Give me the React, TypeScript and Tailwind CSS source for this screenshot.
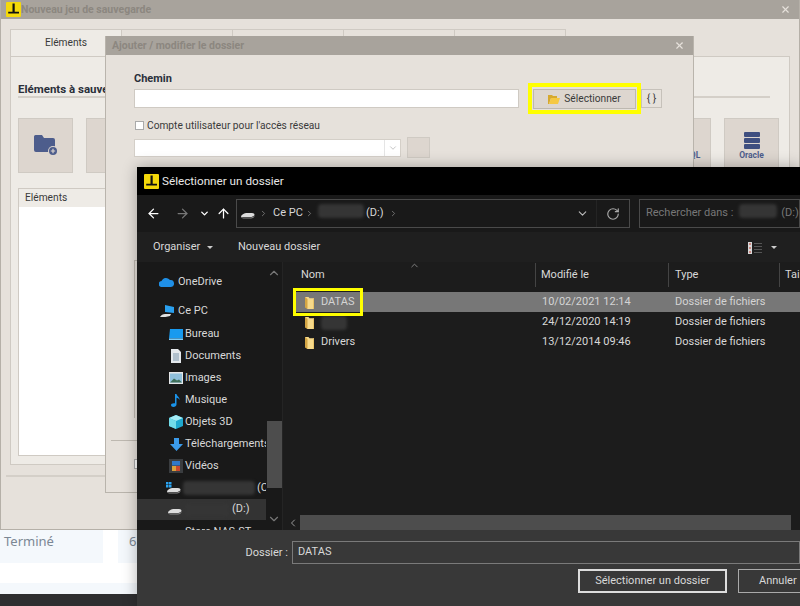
import { ChevronDown, ChevronLeft, ChevronRight, ChevronUp, ArrowLeft, ArrowRight, ArrowUp, RotateCw, X } from 'lucide-react';

function Logo({ size }: { size: number }) {
  return (
    <svg width={size} height={size} viewBox="0 0 15 15" className="shrink-0">
      <rect width="15" height="15" rx="1" fill="#f5d90a" />
      <path d="M6.5 1.5h2.2v8.2h4.3v1.800H2.200V9.700h4.300z" fill="#111" />
    </svg>
  );
}

function Blur({ w, h = 14 }: { w: number; h?: number }) {
  return <span className="inline-block shrink-0 rounded-sm bg-[#353535] blur-[1.5px]" style={{ width: w, height: h }} />;
}

function Folder() {
  return (
    <svg width="11" height="14" viewBox="0 0 11 14" className="shrink-0">
      <path d="M1 1h3.500l1 1.200H10V13H3z" fill="#f6d98a" />
      <path d="M1 1l2.500 2v10L1 11.500z" fill="#d3a544" />
      <path d="M9.200 2.200H10V13h-.8z" fill="#e6bd5e" />
    </svg>
  );
}

function DriveIcon({ win }: { win?: boolean }) {
  return (
    <svg width="15" height="13" viewBox="0 0 15 13" className="shrink-0">
      {win && (
        <g fill="#2aa3f0">
          <rect x="0" y="0" width="2.500" height="2.500" />
          <rect x="3" y="0" width="2.500" height="2.500" />
          <rect x="0" y="3" width="2.500" height="2.500" />
          <rect x="3" y="3" width="2.500" height="2.500" />
        </g>
      )}
      <path d="M1 9.500C1 8 3.500 6.500 6 6h6c1.500 0 2.500.8 2.500 1.800S13 9.500 11.500 10H3C1.800 10 1 10.300 1 9.500z" fill="#dcdcdc" />
      <path d="M1 9.500c.5.800 1.500 1 2.500 1h7.500c1.500 0 3.500-1 3.500-2.500v1c0 1.300-2 2.500-3.500 2.500H3.500C2 11.500 1 10.700 1 9.500z" fill="#8a8a8a" />
    </svg>
  );
}

function NavIcon({ name }: { name: string }) {
  switch (name) {
    case 'bureau':
      return <svg width="14" height="12" viewBox="0 0 14 12"><path d="M1 1h13v9.500H0z" fill="#189aef" /><path d="M0 10.500h14V12H0z" fill="#7fccf6" /></svg>;
    case 'docs':
      return <svg width="12" height="14" viewBox="0 0 12 14"><path d="M1 0h7l3 3v11H1z" fill="#e4e8ec" /><path d="M3 5h6M3 7h6M3 9h6M3 11h6" stroke="#7d97ad" /></svg>;
    case 'images':
      return <svg width="14" height="12" viewBox="0 0 14 12"><rect width="14" height="12" fill="#e4e6e8" /><rect x="1" y="1.500" width="12" height="9" fill="#8fc0dc" /><path d="M1 10.500l4-4 3 2 2-1 3 3z" fill="#3f6f5a" /></svg>;
    case 'music':
      return <svg width="10" height="14" viewBox="0 0 10 14"><path d="M4 1h1.500c.4 2.500 3.500 3 3 6-.7-1.500-2-2.200-3-2.300V11.500C5.500 13 4 14 2.500 14S0 13.200 0 12s1.500-2 4-1.700z" fill="#1a93e8" /></svg>;
    case 'obj':
      return <svg width="14" height="14" viewBox="0 0 14 14"><path d="M7 0l7 3v8l-7 3-7-3V3z" fill="#1fa9cf" /><path d="M7 0l7 3-7 3-7-3z" fill="#a5ecf5" /><path d="M0 3l7 3v8l-7-3z" fill="#72dce9" /></svg>;
    case 'dl':
      return <svg width="13" height="13" viewBox="0 0 13 13"><path d="M4 0h5v6h4l-6.500 7L0 6h4z" fill="#3b9bea" /></svg>;
    default:
      return (
        <svg width="14" height="14" viewBox="0 0 14 14">
          <rect width="14" height="14" fill="#3a3d40" />
          <rect x="3" y="2" width="8" height="4.500" fill="#2f78c9" />
          <rect x="3" y="7" width="4" height="5" fill="#d9a13c" />
          <rect x="7" y="7" width="4" height="5" fill="#c9482f" />
        </svg>
      );
  }
}

function NavRow({ icon, label }: { icon: string; label: string }) {
  return (
    <div className="flex h-[22px] items-center pl-[30px]">
      <span className="flex w-[18px] shrink-0 justify-center"><NavIcon name={icon} /></span>
      <span className="whitespace-nowrap">{label}</span>
    </div>
  );
}

function FileRow({ name, blur, date, selected }: { name?: string; blur?: boolean; date: string; selected?: boolean }) {
  return (
    <div className={`flex h-5 items-center pt-[1px] ${selected ? 'bg-[#777777] text-[#d4d4d4]' : ''}`}>
      <div className="flex w-[249px] items-center gap-[6px] pl-[11px]">
        <Folder />
        {name}
        {blur && <Blur w={26} />}
      </div>
      <div className="w-[133px]">{date}</div>
      <div>Dossier de fichiers</div>
    </div>
  );
}

function FileDialog() {
  return (
    <div className="absolute left-[137px] top-[167px] flex h-[439px] w-[663px] flex-col overflow-hidden bg-[#383838] font-['Roboto',sans-serif] text-[11px] text-[#d8d8d8] shadow-[0_0_14px_rgba(0,0,0,0.3)]">
      <div className="flex h-7 shrink-0 items-center gap-[3px] bg-black pl-[7px] pt-[1px] text-[11.7px] text-[#e8e8e8]">
        <Logo size={15} />
        Sélectionner un dossier
      </div>
      <div className="flex h-[37px] shrink-0 items-center bg-[#191919]">
        <div className="flex w-[99px] shrink-0 items-center pl-[9px]">
          <ArrowLeft size={15} strokeWidth={2} className="text-white" />
          <ArrowRight size={15} strokeWidth={2} className="ml-[14px] text-[#777777]" />
          <ChevronDown size={11} strokeWidth={3} className="ml-[9px] text-white" />
          <ArrowUp size={15} strokeWidth={2} className="ml-[6px] text-white" />
        </div>
        <div className="flex h-[29px] w-[394px] shrink-0 items-center border border-[#4a4a4a] pl-[3px]">
          <DriveIcon />
          <ChevronRight size={9} className="ml-[4px] text-[#888888]" />
          <span className="ml-[5px] w-[28px] whitespace-nowrap">Ce PC</span>
          <ChevronRight size={9} className="ml-[4px] text-[#888888]" />
          <span className="ml-[4px]"><Blur w={46} /></span>
          <span className="ml-[2px]">(D:)</span>
          <ChevronRight size={9} className="ml-[6px] text-[#888888]" />
          <ChevronDown size={13} className="ml-auto text-[#bbbbbb]" />
          <div className="ml-[7px] flex h-full w-[33px] items-center justify-center border-l border-[#242424]">
            <RotateCw size={14} className="text-[#aaaaaa]" />
          </div>
        </div>
        <div className="ml-[9px] flex h-[29px] flex-1 items-center gap-1 whitespace-nowrap border border-[#4a4a4a] pl-[6px] text-[#777777]">
          Rechercher dans :<span className="ml-[2px]"><Blur w={38} /></span>(D:)
        </div>
      </div>
      <div className="flex h-[30px] shrink-0 items-center bg-[#1f1f1f] pl-4 pr-[23px] pt-[1px]">
        <div className="flex w-[85px] items-center">
          Organiser
          <span className="ml-[7px] border-x-[3px] border-t-[3px] border-x-transparent border-t-[#cccccc]" />
        </div>
        Nouveau dossier
        <svg width="14" height="12" viewBox="0 0 14 12" className="ml-auto">
          <rect width="4" height="12" fill="#d7d7d7" />
          <path d="M1 2h2M1 6h2M1 10h2" stroke="#c0392b" />
          <path d="M6 1.500h8M6 4.500h8M6 7.500h8M6 10.500h8" stroke="#555555" />
        </svg>
        <span className="ml-[9px] border-x-[3px] border-t-[3px] border-x-transparent border-t-[#cccccc]" />
      </div>
      <div className="flex h-[268px] shrink-0">
        <div className="flex w-[146px] shrink-0 border-r border-[#242424] bg-[#191919]">
          <div className="w-[129px] overflow-hidden pt-[9px]">
            <div className="flex h-[22px] items-center gap-[4px] pl-[22px]">
              <svg width="15" height="10" viewBox="0 0 15 10"><path d="M3 10a3 3 0 0 1-.5-6A5 5 0 0 1 11 3a3.500 3.500 0 0 1 1 7z" fill="#1f8fe6" /></svg>
              OneDrive
            </div>
            <div className="mb-[1px] mt-[7px] flex h-[22px] items-center gap-[4px] pl-[23px]">
              <svg width="14" height="14" viewBox="0 0 14 14">
                <path d="M5 1l9 2v6l-9-1z" fill="#2aa0ef" />
                <path d="M0 13c1-2 3-3 5-3h6l-1 2c-3 1-6 1-10 1z" fill="#e2e2e2" />
              </svg>
              Ce PC
            </div>
            <NavRow icon="bureau" label="Bureau" />
            <NavRow icon="docs" label="Documents" />
            <NavRow icon="images" label="Images" />
            <NavRow icon="music" label="Musique" />
            <NavRow icon="obj" label="Objets 3D" />
            <NavRow icon="dl" label="Téléchargements" />
            <NavRow icon="videos" label="Vidéos" />
            <div className="flex h-[22px] items-center gap-[2px] whitespace-nowrap pl-[29px]">
              <DriveIcon win />
              <Blur w={72} />
              (C:
            </div>
            <div className="flex h-[21px] items-center gap-[2px] bg-[#333333] pl-[30px]">
              <DriveIcon />
              <Blur w={46} />
              (D:)
            </div>
            <div className="flex h-[24px] items-center whitespace-nowrap pl-[48px]">Store&nbsp;NAS-ST</div>
          </div>
          <div className="flex w-[16px] flex-col items-center justify-between py-1 text-[#777777]">
            <ChevronUp size={14} />
            <div className="mb-[24px] mt-auto h-[67px] w-[15px] bg-[#4d4d4d]" />
            <ChevronDown size={14} />
          </div>
        </div>
        <div className="flex min-w-0 flex-1 flex-col bg-[#1c1c1c] pl-[10px]">
          <div className="flex h-[30px] shrink-0 items-start pt-[1px]">
            <div className="flex h-[24px] w-[243px] items-center justify-between border-r border-[#444444] pl-2 pr-[115px]">
              Nom
              <ChevronUp size={11} className="-mt-5 text-[#888888]" />
            </div>
            <div className="flex h-[24px] w-[133px] items-center border-r border-[#444444] pl-[5px]">Modifié le</div>
            <div className="flex h-[24px] w-[111px] items-center border-r border-[#444444] pl-[6px]">Type</div>
            <div className="flex h-[24px] items-center pl-[5px]">Tai</div>
          </div>
          <FileRow name="DATAS" date="10/02/2021 12:14" selected />
          <FileRow blur date="24/12/2020 14:19" />
          <FileRow name="Drivers" date="13/12/2014 09:46" />
          <div className="-ml-[8px] mt-auto flex h-[15px] items-center bg-[#1c1c1c]">
            <span className="flex w-[15px] justify-center"><ChevronLeft size={12} className="text-[#999999]" /></span>
            <div className="h-full w-[491px] bg-[#4d4d4d]" />
          </div>
        </div>
      </div>
      <div className="flex items-center pt-[11px]">
        <span className="w-[151px] pt-[1px] text-right">Dossier :</span>
        <div className="ml-[4px] flex h-[23px] flex-1 items-center border border-[#7a7a7a] pl-[5px]">DATAS</div>
      </div>
      <div className="flex justify-end gap-[11px] pt-[5px]">
        <button className="h-6 w-[149px] border-2 border-[#dddddd]">Sélectionner un dossier</button>
        <button className="-mr-[18px] h-6 w-[80px] shrink-0 border border-[#aaaaaa] pl-[20px] text-left">Annuler</button>
      </div>
    </div>
  );
}

function FolderDialog() {
  return (
    <div className="absolute left-[105px] top-[36px] flex h-[457px] w-[589px] flex-col border-x border-b border-[#b9b4ac] bg-[#e6e1db] font-['Roboto',sans-serif] text-[10.2px] text-[#3a3a3a]">
      <div className="flex h-[19px] shrink-0 items-center justify-between bg-[#a8a39c] pl-[6px] pr-[8px] text-[10.5px] font-bold text-[#8c8780]">
        Ajouter / modifier le dossier
        <X size={11} strokeWidth={2.5} className="text-[#e6e1db]" />
      </div>
      <div className="pl-[28px] pt-[13px]">
        <div className="text-[11px] font-bold leading-[21px] text-[#2a2f3a]">Chemin</div>
        <div className="flex h-[19px] items-center">
          <div className="h-[19px] w-[385px] border border-[#cfcac3] bg-white" />
          <div className="ml-[9px] flex h-[31px] w-[113px] items-center justify-center outline-4 outline-[#ffff00] -outline-offset-4">
            <div className="flex h-[20px] w-[103px] items-center justify-center gap-1 border border-[#bdb8b0] bg-[#ddd6cf] pt-[1px]">
              <svg width="12" height="9" viewBox="0 0 12 9"><path d="M0 0h4l1 1h4v2H3L1 9H0z" fill="#d6a92e" /><path d="M3 3h9l-2 6H1z" fill="#f5c842" /></svg>
              Sélectionner
            </div>
          </div>
          <div className="flex h-[19px] w-[21px] items-center justify-center border border-[#c6c1ba]">{'{ }'}</div>
        </div>
        <div className="mt-[11px] flex h-[12px] items-center gap-[3px]">
          <span className="ml-[1px] h-[9px] w-[9px] border border-[#aaaaaa] bg-white" />
          <span className="pt-[1px]">Compte utilisateur pour l'accès réseau</span>
        </div>
        <div className="mt-[6px] flex items-center">
          <div className="flex h-[18px] w-[267px] items-center justify-end border border-[#d4cfc8] bg-white">
            <div className="flex h-full w-[16px] items-center justify-center border-l border-[#e5e5e5]">
              <ChevronDown size={10} className="text-[#bbbbbb]" />
            </div>
          </div>
          <div className="ml-[6px] h-[21px] w-[23px] border border-[#cfcac3] bg-[#ddd6cf]" />
        </div>
        <div className="mt-[102px] h-[158px] w-[540px] border-l border-t border-[#bdb8b0]" />
      </div>
      <div className="mx-[5px] mt-[22px] border-t border-[#bdb8b0]" />
      <div className="ml-[28px] mt-[18px] h-[10px] w-[10px] border border-[#aaaaaa] bg-white" />
    </div>
  );
}

function MainWindow() {
  return (
    <div className="flex h-[530px] flex-col border-x border-b border-[#b5b0a8] bg-[#e6e1db] font-['Roboto',sans-serif] text-[#3a3a3a]">
      <div className="flex h-[19px] shrink-0 items-center bg-[#a8a39c] pl-[5px] pr-[8px] text-[10.5px] font-bold text-[#8c8780]">
        <Logo size={15} />
        Nouveau jeu de sauvegarde
        <X size={11} strokeWidth={2.5} className="ml-auto text-[#e6e1db]" />
      </div>
      <div className="ml-[9px] mt-[10px] flex h-[27px] shrink-0">
        <div className="flex w-[112px] items-center justify-center border-x border-t border-[#cfcac3] bg-[#eeebe6] text-[10.2px]">Eléments</div>
        <div className="w-[111px] border-r border-t border-[#cfcac3]" />
        <div className="w-[111px] border-r border-t border-[#cfcac3]" />
        <div className="w-[111px] border-r border-t border-[#cfcac3]" />
        <div className="w-[111px] border-r border-t border-[#cfcac3]" />
      </div>
      <div className="mx-[9px] flex h-[409px] flex-col border border-[#cfcac3] bg-[#eeebe6] px-[7px] pt-[25px]">
        <div className="mr-[12px] border-b-2 border-[#d4cfc8] text-[11.5px] font-bold leading-[14px] text-[#2a2f3a]">Eléments à sauvegarder</div>
        <div className="mr-[3px] mt-[20px] flex justify-between">
          <div className="flex gap-[13px]">
            <div className="flex h-[55px] w-[55px] items-center justify-center border border-[#cfcac3] bg-[#ddd6cf]">
              <svg width="24" height="21" viewBox="0 0 24 21">
                <path d="M0 1.500A1.500 1.500 0 0 1 1.500 0H8l2 3h9a2 2 0 0 1 2 2v10a2 2 0 0 1-2 2H2a2 2 0 0 1-2-2z" fill="#4d5d8c" />
                <circle cx="19" cy="16" r="5" fill="#ddd6cf" />
                <circle cx="19" cy="16" r="4" fill="#4d5d8c" />
                <path d="M19 13.800v4.400M16.800 16h4.400" stroke="#ddd6cf" strokeWidth="1.200" />
              </svg>
            </div>
            <div className="h-[55px] w-[55px] border border-[#cfcac3] bg-[#ddd6cf]" />
          </div>
          <div className="flex gap-[13px]">
            <div className="flex h-[55px] w-[55px] items-end justify-center border border-[#cfcac3] bg-[#ddd6cf] pb-[10px] pl-[18px] text-[8.5px] font-bold text-[#4d5d8c]">SQL</div>
            <div className="flex h-[55px] w-[55px] flex-col items-center border border-[#cfcac3] bg-[#ddd6cf] pt-[13px] text-[8.5px] font-bold leading-[12px] text-[#4d5d8c]">
              <span className="flex w-[16px] flex-col gap-[1px]">
                <span className="h-[5px] rounded-[1px] bg-[#3f4f80]" />
                <span className="h-[5px] rounded-[1px] bg-[#3f4f80]" />
                <span className="h-[5px] rounded-[1px] bg-[#3f4f80]" />
              </span>
              Oracle
            </div>
          </div>
        </div>
        <div className="mb-[8px] mt-[15px] flex flex-1 flex-col border border-[#cfcac3]">
          <div className="flex h-[18px] items-center pl-[6px] text-[10.2px]">Eléments</div>
          <div className="flex-1 bg-white" />
        </div>
      </div>
      <div className="mx-[5px] mt-[10px] border-t-2 border-[#d4cfc8]" />
    </div>
  );
}

export default function App() {
  return (
    <div className="relative h-[606px] w-[800px] overflow-hidden bg-[#2e2e30]">
      <MainWindow />
      <div className="h-[64px] bg-white font-['Noto_Sans',sans-serif] text-[13px] text-[#7b8794]">
        <div className="flex h-[33px] gap-[15px]">
          <div className="flex w-[103px] items-center bg-[#f4f8fc] pb-[9px] pl-1">Terminé</div>
          <div className="flex w-[40px] items-center bg-[#f4f8fc] pb-[9px] pl-[11px]">6</div>
        </div>
        <div className="mt-[20px] h-[11px] bg-[#f4f8fc]" />
      </div>
      <FolderDialog />
      <FileDialog />
      <div className="absolute left-[293px] top-[288px] h-[28px] w-[70px] border-[3px] border-[#ffff00]" />
    </div>
  );
}
